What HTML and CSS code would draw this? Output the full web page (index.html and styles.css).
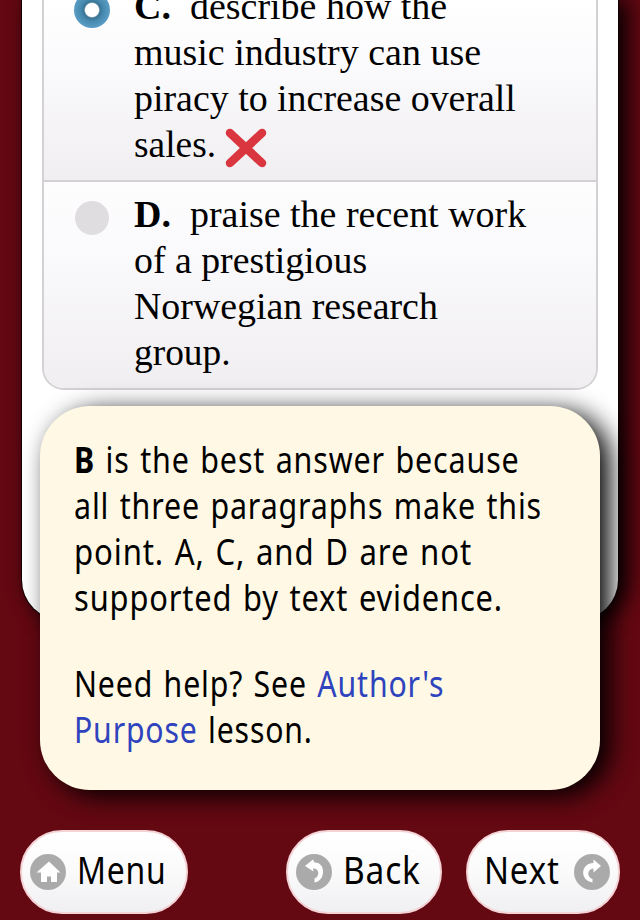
FILE: index.html
```html
<!DOCTYPE html>
<html lang="en">
<head>
<meta charset="utf-8">
<title>Practice question</title>
<link rel="stylesheet" href="styles.css">
</head>
<body>
<main class="page">
  <div class="answers">
    <div class="answer answer-c">
      <span class="radio radio-on"></span>
      <div class="text">
        <div class="line"><span data-width="313"><b>C.</b>&nbsp; describe how the</span></div>
        <div class="line"><span data-width="347">music industry can use</span></div>
        <div class="line"><span data-width="382">piracy to increase overall</span></div>
        <div class="line"><span data-width="82">sales.</span><svg class="cross" viewBox="0 0 42 40"><path d="M5 5 37 35M37 5 5 35"/></svg></div>
      </div>
    </div>
    <div class="answer answer-d">
      <span class="radio"></span>
      <div class="text">
        <div class="line"><span data-width="392"><b>D.</b>&nbsp; praise the recent work</span></div>
        <div class="line"><span data-width="233">of a prestigious</span></div>
        <div class="line"><span data-width="304">Norwegian research</span></div>
        <div class="line"><span data-width="97">group.</span></div>
      </div>
    </div>
  </div>
</main>
<section class="bubble">
  <p>
    <span class="line"><span data-width="446"><b>B</b> is the best answer because</span></span>
    <span class="line"><span data-width="468">all three paragraphs make this</span></span>
    <span class="line"><span data-width="398">point. A, C, and D are not</span></span>
    <span class="line"><span data-width="429">supported by text evidence.</span></span>
  </p>
  <p>
    <span class="line"><span data-width="370">Need help? See <a>Author's</a></span></span>
    <span class="line"><span data-width="239"><a>Purpose</a> lesson.</span></span>
  </p>
</section>
<nav class="bar">
  <button class="btn menu"><svg class="icon" viewBox="0 0 36 36"><circle cx="18" cy="18" r="18"/><path class="fill" d="M19 7.500 30.500 18.500H27V28H21V22.500H17V28H11V18.500H6.500Z"/></svg><span class="label"><span data-width="90">Menu</span></span></button>
  <button class="btn back"><svg class="icon" viewBox="0 0 36 36"><circle cx="18" cy="18" r="18"/><path class="fill" d="M9 12 17 5.500 18.500 8.500C30 8 30 27 18.500 28.500V24.500C24.500 22 23 14 17 14.500L17.500 17.500Z"/></svg><span class="label"><span data-width="78">Back</span></span></button>
  <button class="btn next"><span class="label"><span data-width="76">Next</span></span><svg class="icon" viewBox="0 0 36 36"><circle cx="18" cy="18" r="18"/><path class="fill" d="M27 12 19.500 5.500V9C7 9 5 26 18.500 28.500V25C12.500 23 13 15 19.500 14.500V18.500Z"/></svg></button>
</nav>
<script src="fit.js"></script>
</body>
</html>
```
FILE: styles.css
```css
* { box-sizing: border-box; }
body {
  margin: 0;
  width: 640px;
  height: 920px;
  overflow: hidden;
  background: #640812;
  color: #000;
}
.page {
  height: 620px;
  margin: 0 22px;
  padding: 0 20px;
  background: #fff;
  border-radius: 0 0 40px 40px;
  box-shadow: 0 0 0 1px #100002, 8px 0 22px 1px #000;
}
.answers {
  height: 390px;
  border: 2px solid #d3d1d4;
  border-top: 0;
  border-radius: 0 0 22px 22px;
  overflow: hidden;
}
.answer {
  display: flex;
  padding-left: 31px;
  background: linear-gradient(#fefdfe 0, #faf9fb 35%, #f0eef1 100%);
}
.answer-c {
  height: 182px;
  border-bottom: 2px solid #d3d1d4;
  background: linear-gradient(#fff 0, #fbfafc 35%, #f0eef1 100%);
}
.answer-d { height: 206px; }
.text {
  margin-left: 25px;
  font: 37px/46px "Liberation Serif", serif;
}
.answer-c .text { margin-top: -16px; }
.answer-d .text { margin-top: 10px; }
.line { display: flex; height: 46px; white-space: nowrap; }
.line > span, .label > span { display: block; flex: none; transform-origin: 0 0; }
.radio {
  flex: none;
  width: 34px;
  height: 34px;
  margin-top: 19px;
  border-radius: 50%;
  background: #dfdde0;
}
.radio-on {
  width: 36px;
  height: 36px;
  margin: -8px -1px 0 -1px;
  background: radial-gradient(circle, #fff 0 6.5px, #397393 8px, #4688ad 11px, #579bc3 17px);
}
.cross { width: 42px; height: 40px; margin: 6px 0 0 9px; flex: none; }
.cross path { fill: none; stroke: #d9363f; stroke-width: 8.5; stroke-linecap: round; }
.bubble {
  position: relative;
  height: 384px;
  margin: -214px 40px 0;
  padding: 30px 34px;
  border-radius: 50px;
  background: #fef8e4;
  box-shadow: 10px 6px 26px #000;
  font: 35.5px/46px "Noto Sans", sans-serif;
  letter-spacing: 1px;
  word-spacing: 2px;
}
.bubble p { margin: 0 0 40px; }
.bubble a { color: #2e43bd; }
.bar { display: flex; margin: 40px 20px 0; }
.btn {
  display: flex;
  align-items: center;
  height: 84px;
  padding: 0;
  border: 2px solid #f3d3d6;
  border-radius: 42px;
  background: linear-gradient(#fff 0, #fcfbfc 45%, #f0eff1 100%);
  font: 39px/46px "Noto Sans", sans-serif;
  letter-spacing: 1px;
  color: #000;
}
.label { display: block; white-space: nowrap; margin-top: -6px; }
.menu { width: 168px; padding-left: 8px; }
.back { width: 156px; margin-left: 98px; padding-left: 8px; }
.next { width: 154px; margin-left: 24px; padding-left: 16px; }
.icon { width: 36px; height: 36px; flex: none; }
.icon circle { fill: #aaa; }
.icon .fill { fill: #fff; }
.menu .label { margin-left: 11px; }
.back .label { margin-left: 11px; }
.next .icon { margin-left: 14px; }
```
FILE: fit.js
```js
// Condense each line to its set width
document.querySelectorAll("[data-width]").forEach(function (el) {
  var target = Number(el.dataset.width);
  var natural = el.offsetWidth;
  el.style.transform = "scaleX(" + target / natural + ")";
  el.style.marginRight = target - natural + "px";
});
```
